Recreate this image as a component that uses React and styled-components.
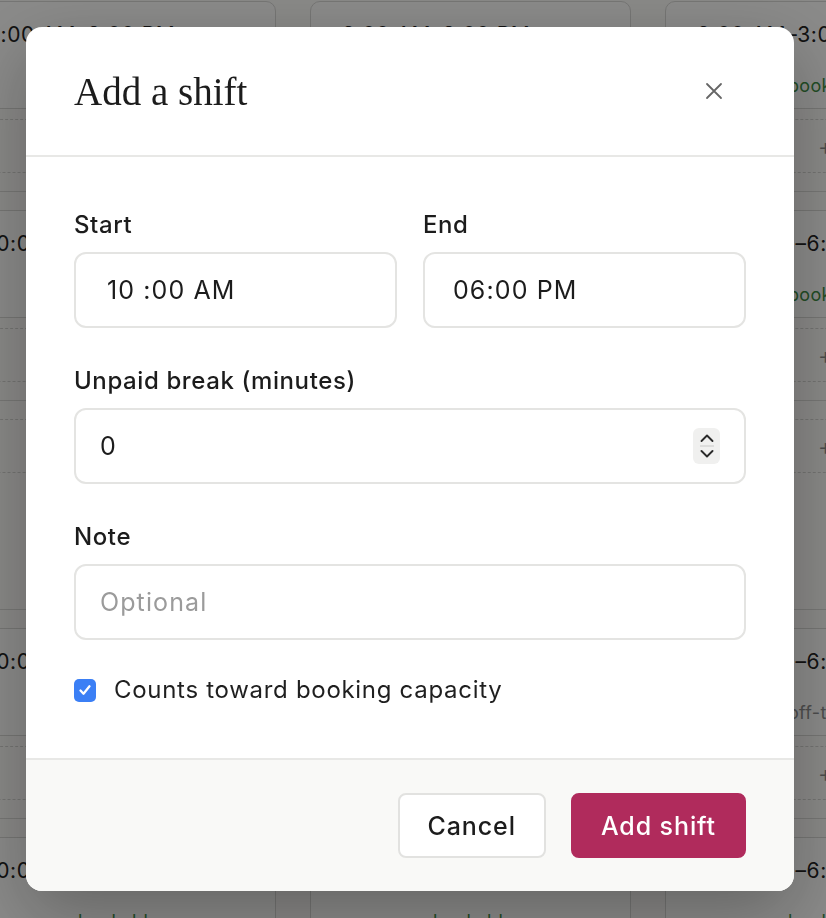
import React from "react";
import styled, { createGlobalStyle } from "styled-components";

const GlobalStyle = createGlobalStyle`
  * {
    box-sizing: border-box;
  }
  html,
  body {
    margin: 0;
    height: 100%;
  }
  body {
    background: #faf9f6;
    color: #1f1f1f;
    font-family: "Inter", "Liberation Sans", sans-serif;
    overflow: hidden;
  }
`;

const Page = styled.div`
  width: 100vw;
  height: 100vh;
  overflow: hidden;
`;

/* background schedule */

const Board = styled.div`
  width: 1031px;
  margin: -17px 0 0 -45px;
`;

const DayRow = styled.div`
  display: grid;
  grid-template-columns: repeat(3, 321px);
  column-gap: 34px;
  padding: 18px 0;
  border-bottom: 1px solid #d8d8d5;
`;

const Cell = styled.div`
  display: flex;
  flex-direction: column;
  gap: 10px;
  min-height: 172px;
`;

const ShiftCard = styled.div`
  height: 108px;
  padding-top: 20px;
  border: 1px solid #d6d6d3;
  border-radius: 10px;
  background: #fcfcfa;
`;

const ShiftTime = styled.div`
  padding-left: 31px;
  font-size: 21px;
  line-height: 26px;
  letter-spacing: 0.6px;
  white-space: nowrap;
  color: #222;
`;

const ShiftStatus = styled.div`
  margin-top: 26px;
  padding-left: 122px;
  font-size: 18px;
  line-height: 24px;
  letter-spacing: 0.3px;
  white-space: nowrap;
  color: ${(p) => (p.$off ? "#8c8c8c" : "#3f8c44")};
`;

const AddSlot = styled.div`
  display: flex;
  height: 54px;
  align-items: center;
  justify-content: center;
  border: 1.5px dashed #d2d2cf;
  border-radius: 10px;
  font-size: 24px;
  font-weight: 300;
  color: #8a8a8a;
`;

/* modal */

const Overlay = styled.div`
  position: fixed;
  inset: 0;
  display: flex;
  align-items: center;
  padding-left: 26px;
  background: rgba(0, 0, 0, 0.45);
`;

const Modal = styled.div`
  width: 768px;
  overflow: hidden;
  border-radius: 16px;
  background: #fff;
  box-shadow: 0 24px 70px rgba(0, 0, 0, 0.28);
`;

const Header = styled.div`
  display: flex;
  height: 130px;
  padding: 0 48px;
  align-items: center;
  justify-content: space-between;
  border-bottom: 2px solid #e8e8e6;
`;

const Title = styled.h2`
  margin: 0;
  font-family: "Liberation Serif", "DejaVu Serif", serif;
  font-size: 39px;
  font-weight: 400;
  color: #1c1c1c;
`;

const CloseButton = styled.button`
  display: flex;
  width: 20px;
  height: 20px;
  margin-right: 22px;
  padding: 0;
  border: 0;
  background: none;
  align-items: center;
  justify-content: center;
  color: #666;
  cursor: pointer;
`;

const Body = styled.div`
  display: flex;
  flex-direction: column;
  gap: 39px;
  padding: 54px 48px 57px;
`;

const Field = styled.div`
  display: flex;
  flex-direction: column;
  gap: 13px;
`;

const TimeRow = styled.div`
  display: grid;
  grid-template-columns: 1fr 1fr;
  gap: 26px;
`;

const Label = styled.label`
  font-size: 24px;
  font-weight: 500;
  line-height: 28px;
  letter-spacing: 0.6px;
  color: #1c1c1c;
`;

const Input = styled.input`
  width: 100%;
  height: 76px;
  padding: 0 ${(p) => p.$pad || 24}px;
  border: 2px solid #e4e4e2;
  border-radius: 12px;
  background: #fff;
  font-family: inherit;
  font-size: 25px;
  letter-spacing: 1.1px;
  color: #1c1c1c;
  outline: none;

  &::placeholder {
    color: #9b9b9b;
  }
`;

const NumberBox = styled.div`
  display: flex;
  height: 76px;
  padding: 0 24px;
  align-items: center;
  border: 2px solid #e4e4e2;
  border-radius: 12px;
  background: #fff;
`;

const BareInput = styled.input`
  flex: 1;
  min-width: 0;
  padding: 0;
  border: 0;
  background: none;
  font-family: inherit;
  font-size: 25px;
  letter-spacing: 1.1px;
  color: #1c1c1c;
  outline: none;
`;

const Stepper = styled.span`
  display: flex;
  width: 27px;
  height: 36px;
  flex-direction: column;
  align-items: center;
  justify-content: center;
  border-radius: 6px;
  background: #f0f0ef;
`;

const CheckRow = styled.label`
  display: flex;
  height: 22px;
  align-items: center;
  gap: 18px;
  font-size: 24px;
  line-height: 22px;
  letter-spacing: 0.7px;
  color: #1f1f1f;
`;

const CheckBox = styled.span`
  display: flex;
  width: 22px;
  height: 23px;
  align-items: center;
  justify-content: center;
  border-radius: 5px;
  background: #3b7ff5;
`;

const Footer = styled.div`
  display: flex;
  padding: 33px 48px;
  justify-content: flex-end;
  gap: 25px;
  border-top: 2px solid #e8e8e6;
  background: #f9f9f7;
`;

const Button = styled.button`
  height: 65px;
  padding: 0 28px;
  border: 2px solid ${(p) => (p.$primary ? "#b02b5c" : "#e2e2e0")};
  border-radius: 8px;
  background: ${(p) => (p.$primary ? "#b02b5c" : "#fff")};
  font-family: inherit;
  font-size: 25px;
  font-weight: 500;
  letter-spacing: 0.9px;
  color: ${(p) => (p.$primary ? "#fff" : "#1c1c1c")};
  cursor: pointer;
`;

const rows = [
  [
    { time: "9:00 AM–3:00 PM", status: "bookable" },
    { time: "9:00 AM–3:00 PM", status: "bookable" },
    { time: "9:00 AM–3:00 PM", status: "bookable" },
  ],
  [
    { time: "10:00 AM–6:00 PM", status: "bookable" },
    { time: "10:00 AM–6:00 PM", status: "bookable" },
    { time: "10:00 AM–6:00 PM", status: "bookable" },
  ],
  [null, null, null],
  [
    { time: "10:00 AM–6:00 PM", status: "bookable" },
    { time: "10:00 AM–6:00 PM", status: "bookable" },
    { time: "10:00 AM–6:00 PM", status: "off-the-floor", off: true },
  ],
  [
    { time: "10:00 AM–6:00 PM", status: "bookable" },
    { time: "10:00 AM–6:00 PM", status: "bookable" },
    { time: "10:00 AM–6:00 PM", status: "bookable" },
  ],
];

function Schedule() {
  return (
    <Board>
      {rows.map((row, i) => (
        <DayRow key={i}>
          {row.map((shift, j) => (
            <Cell key={j}>
              {shift && (
                <ShiftCard>
                  <ShiftTime>{shift.time}</ShiftTime>
                  <ShiftStatus $off={shift.off}>{shift.status}</ShiftStatus>
                </ShiftCard>
              )}
              <AddSlot>+</AddSlot>
            </Cell>
          ))}
        </DayRow>
      ))}
    </Board>
  );
}

function StepperIcon() {
  return (
    <Stepper>
      <svg width="18" height="30" viewBox="0 0 18 30" fill="none">
        <path d="M3.5 10l5.5-5.5 5.5 5.5" stroke="#2a2a2a" strokeWidth="1.9" strokeLinecap="round" strokeLinejoin="round" />
        <path d="M2 15h14" stroke="#cfcfcd" strokeWidth="1.2" />
        <path d="M3.5 20l5.5 5.5 5.5-5.5" stroke="#2a2a2a" strokeWidth="1.9" strokeLinecap="round" strokeLinejoin="round" />
      </svg>
    </Stepper>
  );
}

export default function App() {
  return (
    <Page>
      <GlobalStyle />
      <Schedule />
      <Overlay>
        <Modal role="dialog" aria-label="Add a shift">
          <Header>
            <Title>Add a shift</Title>
            <CloseButton aria-label="Close">
              <svg width="18" height="18" viewBox="0 0 18 18" fill="none">
                <path d="M2 2l14 14M16 2L2 16" stroke="currentColor" strokeWidth="1.8" strokeLinecap="round" />
              </svg>
            </CloseButton>
          </Header>
          <Body>
            <TimeRow>
              <Field>
                <Label>Start</Label>
                <Input $pad={31} defaultValue="10 :00 AM" />
              </Field>
              <Field>
                <Label>End</Label>
                <Input $pad={28} defaultValue="06:00 PM" />
              </Field>
            </TimeRow>
            <Field>
              <Label>Unpaid break (minutes)</Label>
              <NumberBox>
                <BareInput defaultValue="0" />
                <StepperIcon />
              </NumberBox>
            </Field>
            <Field>
              <Label>Note</Label>
              <Input placeholder="Optional" />
            </Field>
            <CheckRow>
              <CheckBox>
                <svg width="16" height="16" viewBox="0 0 16 16" fill="none">
                  <path d="M3.5 8.5l3 3.2 6-7.4" stroke="#fff" strokeWidth="2.3" strokeLinecap="round" strokeLinejoin="round" />
                </svg>
              </CheckBox>
              Counts toward booking capacity
            </CheckRow>
          </Body>
          <Footer>
            <Button>Cancel</Button>
            <Button $primary>Add shift</Button>
          </Footer>
        </Modal>
      </Overlay>
    </Page>
  );
}
